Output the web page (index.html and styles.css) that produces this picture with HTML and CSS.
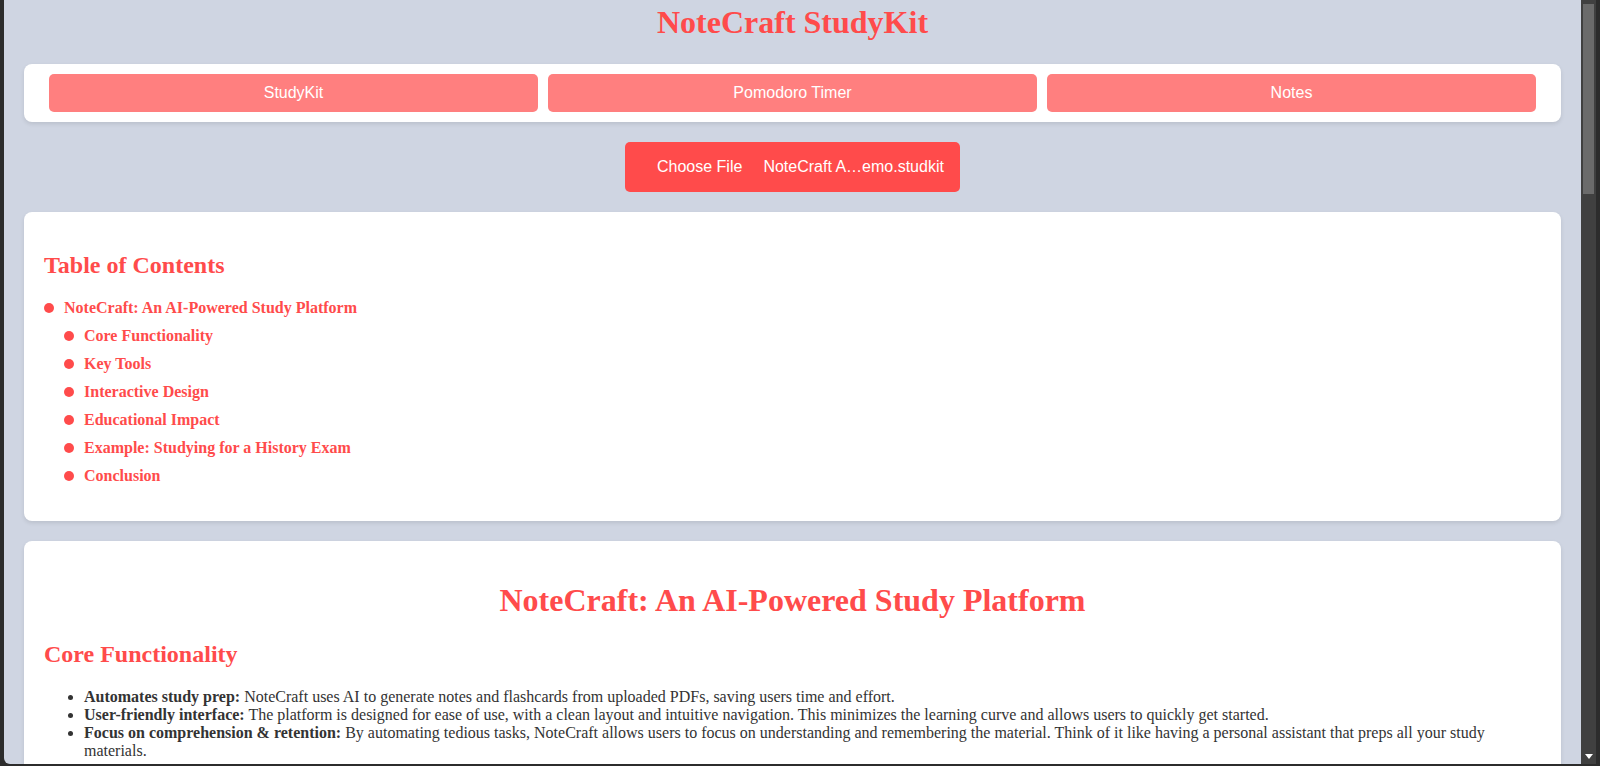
FILE: index.html
```html
<!DOCTYPE html>
<html lang="en">
<head>
<meta charset="utf-8">
<title>NoteCraft StudyKit</title>
<link rel="stylesheet" href="styles.css">
</head>
<body>
<div class="screen">
  <div class="viewport">
    <div class="page">
      <h1 class="site-title">NoteCraft StudyKit</h1>
      <nav class="card tabs">
        <button class="tab">StudyKit</button>
        <button class="tab">Pomodoro Timer</button>
        <button class="tab">Notes</button>
      </nav>
      <div class="file-row">
        <label class="file-input">
          <span class="file-btn">Choose File</span>
          <span class="file-name">NoteCraft A…emo.studkit</span>
        </label>
      </div>
      <section class="card toc">
        <h2 class="section-title">Table of Contents</h2>
        <ul class="toc-list">
          <li><a class="toc-link">NoteCraft: An AI-Powered Study Platform</a>
            <ul class="toc-sub">
              <li><a class="toc-link">Core Functionality</a></li>
              <li><a class="toc-link">Key Tools</a></li>
              <li><a class="toc-link">Interactive Design</a></li>
              <li><a class="toc-link">Educational Impact</a></li>
              <li><a class="toc-link">Example: Studying for a History Exam</a></li>
              <li><a class="toc-link">Conclusion</a></li>
            </ul>
          </li>
        </ul>
      </section>
      <section class="card doc">
        <h1 class="doc-title">NoteCraft: An AI-Powered Study Platform</h1>
        <h2 class="section-title">Core Functionality</h2>
        <ul class="doc-list">
          <li><strong>Automates study prep:</strong> NoteCraft uses AI to generate notes and flashcards from uploaded PDFs, saving users time and effort.</li>
          <li><strong>User-friendly interface:</strong> The platform is designed for ease of use, with a clean layout and intuitive navigation. This minimizes the learning curve and allows users to quickly get started.</li>
          <li><strong>Focus on comprehension &amp; retention:</strong> By automating tedious tasks, NoteCraft allows users to focus on understanding and remembering the material. Think of it like having a personal assistant that preps all your study materials.</li>
        </ul>
      </section>
    </div>
  </div>
  <div class="scrollbar">
    <div class="track">
      <div class="thumb"></div>
      <div class="arrow"></div>
    </div>
    <div class="edge"></div>
  </div>
</div>
</body>
</html>
```
FILE: styles.css
```css
html, body {
  margin: 0;
  padding: 0;
  height: 100%;
  overflow: hidden;
}
body {
  background: #2c2c2c;
  font-family: "Liberation Serif", "Times New Roman", serif;
  font-size: 16px;
}
.screen {
  display: flex;
  height: 766px;
  width: 1600px;
}
.viewport {
  flex: 1;
  margin-left: 4px;
  height: 764px;
  background: #cfd5e2;
  overflow: hidden;
  border-bottom-left-radius: 6px;
}
.page {
  padding: 0 20px;
}
.site-title {
  margin: 4px 0 23px;
  text-align: center;
  color: #ff4b4b;
  font-size: 32px;
  font-weight: bold;
}
.card {
  background: #fff;
  border-radius: 8px;
  box-shadow: 0 2px 4px rgba(0, 0, 0, 0.1);
}
.tabs {
  display: flex;
  gap: 10px;
  padding: 10px 25px;
}
.tab {
  flex: 1;
  height: 38px;
  border: none;
  border-radius: 5px;
  background: #ff7f7f;
  color: #fff;
  font-family: "Liberation Sans", Arial, sans-serif;
  font-size: 16px;
}
.file-row {
  display: flex;
  justify-content: center;
  margin: 20px 0;
}
.file-input {
  display: flex;
  align-items: center;
  box-sizing: border-box;
  width: 335px;
  height: 50px;
  padding-left: 32px;
  background: #ff4b4b;
  border-radius: 5px;
  color: #fff;
  font-family: "Liberation Sans", Arial, sans-serif;
  font-size: 16px;
  white-space: nowrap;
}
.file-btn {
  margin-right: 21px;
}
.toc {
  padding: 20px;
  margin-bottom: 20px;
}
.section-title {
  color: #ff4b4b;
  font-size: 24px;
  font-weight: bold;
  margin: 19.92px 0;
}
.toc-list, .toc-sub {
  list-style: none;
  padding: 0;
  margin: 0 0 16px;
  line-height: 18px;
}
.toc-sub {
  margin: 10px 0 0 20px;
}
.toc-sub li + li {
  margin-top: 10px;
}
.toc-link {
  color: #ff4b4b;
  font-weight: bold;
}
.toc-link::before {
  content: "";
  display: inline-block;
  width: 10px;
  height: 10px;
  border-radius: 50%;
  background: #ff4b4b;
  margin-right: 10px;
}
.doc {
  padding: 20px;
}
.doc-title {
  text-align: center;
  color: #ff4b4b;
  font-size: 32px;
  margin: 21.44px 0;
}
.doc-list {
  color: #333;
  margin: 0;
  padding-left: 40px;
}
.scrollbar {
  display: flex;
  width: 19px;
  height: 766px;
}
.track {
  width: 15px;
  height: 764px;
  background: #404040;
  display: flex;
  flex-direction: column;
  justify-content: space-between;
  align-items: center;
}
.thumb {
  margin-top: 4px;
  width: 11px;
  height: 190px;
  background: #6b6b6b;
}
.arrow {
  width: 0;
  height: 0;
  border-left: 4px solid transparent;
  border-right: 4px solid transparent;
  border-top: 5px solid #fff;
  margin-bottom: 5px;
}
.edge {
  width: 4px;
  background: #2c2c2c;
}
```
